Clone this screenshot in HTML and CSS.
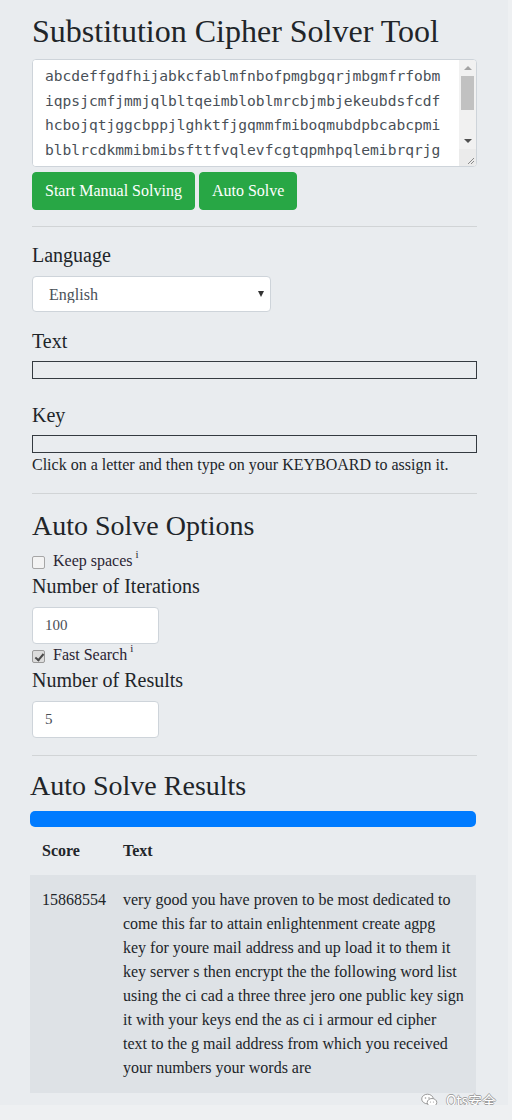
FILE: index.html
```html
<!DOCTYPE html>
<html lang="en">
<head>
<meta charset="utf-8">
<title>Substitution Cipher Solver Tool</title>
<link rel="stylesheet" href="styles.css">
</head>
<body>
<div class="page">
  <main class="container">
    <h1 class="title">Substitution Cipher Solver Tool</h1>
    <div class="cipher-box">
      <textarea class="cipher-input" spellcheck="false">abcdeffgdfhijabkcfablmfnbofpmgbgqrjmbgmfrfobm
iqpsjcmfjmmjqlbltqeimbloblmrcbjmbjekeubdsfcdf
hcbojqtjggcbppjlghktfjgqmmfmiboqmubdpbcabcpmi
blblrcdkmmibmibsfttfvqlevfcgtqpmhpqlemibrqrjg</textarea>
      <div class="scrollbar" aria-hidden="true">
        <div class="sb-btn"><span class="tri-up"></span></div>
        <div class="sb-track"><div class="sb-thumb"></div></div>
        <div class="sb-btn"><span class="tri-down"></span></div>
        <div class="sb-corner">
          <svg width="17" height="17" viewBox="0 0 17 17"><path d="M15 9 L9 15 M15 12 L12 15" stroke="#8a8a8a" stroke-width="1" fill="none"/></svg>
        </div>
      </div>
    </div>
    <div class="btn-row">
      <button class="btn">Start Manual Solving</button>
      <button class="btn">Auto Solve</button>
    </div>

    <hr class="rule rule-first">

    <label class="field-label lang-label">Language</label>
    <div class="select-wrap">
      <select class="select"><option>English</option></select>
    </div>

    <div class="field-label text-label">Text</div>
    <div class="letter-box"></div>

    <div class="field-label key-label">Key</div>
    <div class="letter-box"></div>
    <p class="hint">Click on a letter and then type on your KEYBOARD to assign it.</p>

    <hr class="rule rule-mid">

    <h2 class="section-title">Auto Solve Options</h2>
    <label class="check-row"><input type="checkbox" class="check"><span>Keep spaces</span><sup class="info">i</sup></label>
    <div class="field-label opt-label">Number of Iterations</div>
    <input class="num" type="text" value="100">
    <label class="check-row"><input type="checkbox" class="check" checked><span>Fast Search</span><sup class="info">i</sup></label>
    <div class="field-label opt-label">Number of Results</div>
    <input class="num" type="text" value="5">

    <hr class="rule rule-last">

    <section class="results">
      <h2 class="section-title results-title">Auto Solve Results</h2>
      <div class="progress"><div class="progress-bar" style="width:100%"></div></div>
      <table class="table">
        <colgroup><col class="col-score"><col></colgroup>
        <thead>
          <tr><th>Score</th><th>Text</th></tr>
        </thead>
        <tbody>
          <tr>
            <td>15868554</td>
            <td class="result-text">very good you have proven to be most dedicated to<br>come this far to attain enlightenment create agpg<br>key for youre mail address and up load it to them it<br>key server s then encrypt the the following word list<br>using the ci cad a three three jero one public key sign<br>it with your keys end the as ci i armour ed cipher<br>text to the g mail address from which you received<br>your numbers your words are</td>
          </tr>
        </tbody>
      </table>
    </section>
  </main>
  <div class="watermark">
    <svg class="wm-icon" width="17" height="15" viewBox="0 0 17 15">
      <ellipse cx="6.5" cy="6" rx="5.8" ry="4.8" fill="#fff" stroke="#9a9a9a" stroke-width="1"/>
      <ellipse cx="11" cy="9.5" rx="4.8" ry="4" fill="#fff" stroke="#9a9a9a" stroke-width="1"/>
      <circle cx="4.5" cy="5" r="0.8" fill="#9a9a9a"/>
      <circle cx="8" cy="5" r="0.8" fill="#9a9a9a"/>
      <circle cx="9.5" cy="9" r="0.6" fill="#9a9a9a"/>
      <circle cx="12.5" cy="9" r="0.6" fill="#9a9a9a"/>
    </svg>
    <span class="wm-text">Ots安全</span>
  </div>
</div>
</body>
</html>
```

FILE: styles.css
```css
html, body {
  margin: 0;
  padding: 0;
}

body {
  background: #eef0f2;
  font-family: "Liberation Serif", "Times New Roman", serif;
  color: #212529;
  font-size: 16px;
  line-height: 24px;
}

.page {
  position: relative;
  width: 508px;
  min-height: 1105px;
  background: #e9ecef;
}

.container {
  width: 445px;
  padding: 12px 0 0 32px;
}

.title {
  margin: 0 0 9px;
  font-size: 32px;
  line-height: 38px;
  font-weight: 400;
}

/* cipher textarea */
.cipher-box {
  display: flex;
  height: 108px;
  box-sizing: border-box;
  border: 1px solid #ced4da;
  border-radius: 4px;
  background: #fff;
  overflow: hidden;
}

.cipher-input {
  flex: 1;
  border: 0;
  margin: 0;
  resize: none;
  padding: 4px 12px;
  font-family: "DejaVu Sans Mono", "Liberation Mono", monospace;
  font-size: 14.6px;
  line-height: 24.5px;
  color: #495057;
  background: #fff;
  overflow: hidden;
  outline: none;
  white-space: pre;
}

.scrollbar {
  width: 17px;
  display: flex;
  flex-direction: column;
  background: #f1f1f1;
}

.sb-btn {
  height: 16px;
  display: flex;
  align-items: center;
  justify-content: center;
}

.tri-up {
  width: 0;
  height: 0;
  border-left: 4px solid transparent;
  border-right: 4px solid transparent;
  border-bottom: 4px solid #a3a3a3;
}

.tri-down {
  width: 0;
  height: 0;
  border-left: 4px solid transparent;
  border-right: 4px solid transparent;
  border-top: 4px solid #505050;
}

.sb-track {
  flex: 1;
  padding: 0 2px;
}

.sb-thumb {
  height: 34px;
  background: #c1c1c1;
}

.sb-corner {
  height: 17px;
  background: #ebebeb;
}

.sb-corner svg {
  display: block;
}

/* buttons */
.btn-row {
  display: flex;
  gap: 4px;
  margin-top: 5px;
}

.btn {
  height: 38px;
  padding: 0 12px;
  border: 1px solid #28a745;
  border-radius: 4px;
  background: #28a745;
  color: #fff;
  font-family: "Liberation Serif", serif;
  font-size: 16px;
}

/* rules */
.rule {
  border: 0;
  border-top: 1px solid rgba(0, 0, 0, 0.1);
  height: 0;
  margin: 0;
}

.rule-first {
  margin: 16px 0 13px;
}

.rule-mid {
  margin: 16px 0 15px;
}

.rule-last {
  margin: 17px 0 13px;
}

/* labels & fields */
.field-label {
  display: block;
  font-size: 20px;
  line-height: 30px;
}

.lang-label {
  margin-bottom: 6px;
}

.text-label {
  margin: 14px 0 5px;
}

.key-label {
  margin: 21px 0 5px;
}

.opt-label {
  margin-bottom: 6px;
}

.select-wrap {
  position: relative;
  width: 239px;
  height: 36px;
}

.select {
  appearance: none;
  -webkit-appearance: none;
  width: 100%;
  height: 100%;
  box-sizing: border-box;
  border: 1px solid #ced4da;
  border-radius: 4px;
  background: #fff;
  padding: 0 16px;
  font-family: "Liberation Serif", serif;
  font-size: 16px;
  color: #495057;
}

.select-wrap::after {
  content: "";
  position: absolute;
  right: 7px;
  top: 15px;
  border-left: 3px solid transparent;
  border-right: 3px solid transparent;
  border-top: 6px solid #333;
}

.letter-box {
  height: 18px;
  box-sizing: border-box;
  border: 1px solid #343a40;
}

.hint {
  margin: 0;
}

/* options */
.section-title {
  margin: 0 0 7px;
  font-size: 28px;
  line-height: 34px;
  font-weight: 400;
}

.check-row {
  display: flex;
  align-items: center;
  height: 21px;
  gap: 8px;
  color: #2b2533;
}

.check {
  appearance: none;
  -webkit-appearance: none;
  position: relative;
  width: 13px;
  height: 13px;
  margin: 4px 0 0;
  box-sizing: border-box;
  border: 1px solid #a6a6a6;
  border-radius: 2px;
  background: #f3f3f3;
}

.check:checked {
  background: #dcdcdc;
  border-color: #9a9a9a;
}

.check:checked::after {
  content: "";
  position: absolute;
  left: 3.5px;
  top: 0.5px;
  width: 3px;
  height: 7px;
  border: solid #4a4a4a;
  border-width: 0 2px 2px 0;
  transform: rotate(40deg);
}

.info {
  font-size: 11px;
  line-height: 1;
  margin-left: -5px;
  align-self: flex-start;
  margin-top: -1px;
}

.num {
  display: block;
  width: 127px;
  height: 37px;
  box-sizing: border-box;
  border: 1px solid #ced4da;
  border-radius: 4px;
  background: #fff;
  padding: 0 12px;
  font-family: "Liberation Serif", serif;
  font-size: 15px;
  color: #495057;
  margin: 0;
}

/* results */
.results {
  margin-left: -2px;
  width: 446px;
}

.results-title {
  margin-bottom: 8px;
}

.progress {
  height: 16px;
  border-radius: 5px;
  background: #e9ecef;
  overflow: hidden;
}

.progress-bar {
  height: 100%;
  background: #007bff;
}

.table {
  width: 100%;
  border-collapse: collapse;
  table-layout: fixed;
}

.table th,
.table td {
  padding: 12px;
  text-align: left;
  vertical-align: top;
}

.table th {
  font-weight: 700;
}

.col-score {
  width: 81px;
}

.table tbody tr {
  background: #dee2e6;
}

.table tbody td {
  padding-top: 13px;
  padding-bottom: 13px;
  white-space: nowrap;
  overflow: visible;
}

/* watermark */
.watermark {
  position: absolute;
  right: 12px;
  bottom: -3px;
  display: flex;
  align-items: center;
  gap: 8px;
}

.wm-text {
  font-family: "Noto Sans CJK SC", "Noto Sans", sans-serif;
  font-size: 14px;
  line-height: 16px;
  color: #fff;
  text-shadow: 0.7px 0 0 #a0a0a0, -0.7px 0 0 #a0a0a0, 0 0.7px 0 #a0a0a0, 0 -0.7px 0 #a0a0a0;
}
```
